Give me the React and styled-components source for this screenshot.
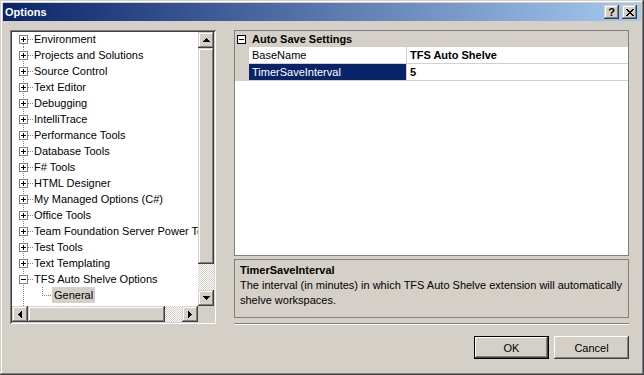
import React from 'react';
import styled, { createGlobalStyle, css } from 'styled-components';

const FACE = '#D4D0C8';
const SHADOW = '#808080';
const DARK = '#404040';
const HILITE = '#FFFFFF';
const NAVY = '#0A246A';

const Global = createGlobalStyle`
  html, body { margin: 0; padding: 0; background: ${FACE}; }
  body { font-family: "Liberation Sans", Arial, sans-serif; font-size: 11px; color: #000; }
  * { box-sizing: border-box; }
`;

const raisedSoft = css`
  background: ${FACE};
  box-shadow: inset -1px -1px ${DARK}, inset 1px 1px ${FACE}, inset -2px -2px ${SHADOW}, inset 2px 2px ${HILITE};
`;

const checker = css`
  background: repeating-conic-gradient(${HILITE} 0 25%, ${FACE} 0 50%) 0 0 / 2px 2px;
`;

const Window = styled.div`
  width: 644px;
  height: 375px;
  padding: 3px;
  background: ${FACE};
  box-shadow: inset -1px -1px ${DARK}, inset 1px 1px ${FACE}, inset -2px -2px ${SHADOW}, inset 2px 2px ${HILITE};
  display: flex;
  flex-direction: column;
`;

const TitleBar = styled.div`
  height: 18px;
  flex: none;
  background: linear-gradient(to right, ${NAVY}, #A6CAF0);
  display: flex;
  align-items: center;
  padding: 0 4px 0 2px;
`;

const TitleText = styled.div`
  flex: 1;
  color: #fff;
  font-weight: bold;
  font-size: 11px;
  line-height: 18px;
`;

const CaptionButton = styled.div`
  ${raisedSoft};
  width: 15px;
  height: 14px;
  margin-left: ${p => (p.$gap ? '3px' : '0')};
  display: flex;
  align-items: center;
  justify-content: center;
  font-weight: bold;
  font-size: 11px;
  line-height: 14px;
`;

const Body = styled.div`
  flex: 1;
  display: flex;
  flex-direction: column;
  padding: 9px 12px 0 7px;
`;

const MainRow = styled.div`
  height: 295px;
  display: flex;
  gap: 18px;
`;

/* ---------- Tree ---------- */
const TreeFrame = styled.div`
  width: 206px;
  height: 294px;
  padding: 2px;
  background: #fff;
  box-shadow: inset 1px 1px ${SHADOW}, inset -1px -1px ${HILITE}, inset 2px 2px ${DARK}, inset -2px -2px ${FACE};
  display: grid;
  grid-template-columns: 1fr 16px;
  grid-template-rows: 1fr 16px;
`;

const TreeViewport = styled.div`
  overflow: hidden;
  background: #fff;
`;

const TreeList = styled.div`
  margin-top: -1px;
  display: flex;
  flex-direction: column;
`;

const TreeRow = styled.div`
  height: 16px;
  display: flex;
  align-items: center;
  white-space: nowrap;
  flex: none;
`;

const TreeLabel = styled.span`
  height: 16px;
  line-height: 16px;
  padding: 0 ${p => (p.$selected ? '2px' : '1px')};
  background: ${p => (p.$selected ? FACE : 'transparent')};
`;

const VScroll = styled.div`
  display: flex;
  flex-direction: column;
  ${checker};
`;

const HScroll = styled.div`
  display: flex;
  ${checker};
`;

const Track = styled.div`
  flex: 1;
`;

const Corner = styled.div`
  background: ${FACE};
`;

const ScrollButton = styled.div`
  ${raisedSoft};
  width: 16px;
  height: 16px;
  flex: none;
  display: flex;
  align-items: center;
  justify-content: center;
`;

const Thumb = styled.div`
  ${raisedSoft};
  flex: none;
  width: ${p => (p.$horizontal ? `${p.$size}px` : '16px')};
  height: ${p => (p.$horizontal ? '16px' : `${p.$size}px`)};
`;

/* ---------- Right column ---------- */
const RightCol = styled.div`
  flex: 1;
  display: flex;
  flex-direction: column;
`;

const PropGrid = styled.div`
  height: 226px;
  flex: none;
  border: 1px solid ${SHADOW};
  background: #fff;
  display: flex;
  flex-direction: column;
`;

const CategoryRow = styled.div`
  height: 16px;
  background: ${FACE};
  display: flex;
  align-items: center;
  padding-left: 2px;
  font-weight: bold;
  gap: 6px;
`;

const PropRow = styled.div`
  height: 17px;
  display: flex;
`;

const Margin = styled.div`
  width: 14px;
  flex: none;
  background: ${FACE};
`;

const NameCell = styled.div`
  width: 158px;
  flex: none;
  height: 17px;
  border-bottom: 1px solid ${FACE};
  border-right: 1px solid ${FACE};
  padding-left: 3px;
  line-height: 16px;
  background: ${p => (p.$selected ? NAVY : '#fff')};
  color: ${p => (p.$selected ? '#fff' : '#000')};
`;

const ValueCell = styled.div`
  flex: 1;
  height: 17px;
  border-bottom: 1px solid ${FACE};
  padding-left: 3px;
  line-height: 16px;
  font-weight: bold;
`;

const DescPane = styled.div`
  margin-top: 3px;
  height: 59px;
  flex: none;
  border: 1px solid ${SHADOW};
  padding: 2px 5px;
`;

const DescTitle = styled.div`
  font-weight: bold;
  line-height: 16px;
`;

const DescText = styled.div`
  line-height: 15px;
`;

const Separator = styled.div`
  margin-top: auto;
  height: 2px;
  border-top: 1px solid ${SHADOW};
  border-bottom: 1px solid ${HILITE};
`;

const Footer = styled.div`
  margin-top: 11px;
  display: flex;
  justify-content: flex-end;
  gap: 5px;
`;

const Button = styled.div`
  width: 75px;
  height: 23px;
  display: flex;
  align-items: center;
  justify-content: center;
  background: ${FACE};
  ${p =>
    p.$default
      ? css`
          box-shadow: inset 0 0 0 1px #000, inset -2px -2px ${DARK}, inset 2px 2px ${HILITE}, inset -3px -3px ${SHADOW};
        `
      : css`
          box-shadow: inset -1px -1px ${DARK}, inset 1px 1px ${HILITE}, inset -2px -2px ${SHADOW};
        `}
`;

/* ---------- Drawings ---------- */
const CloseGlyph = () => (
  <svg width="8" height="7" shapeRendering="crispEdges">
    <path
      d="M0 0h2v1H0z M6 0h2v1H6z M1 1h2v1H1z M5 1h2v1H5z M2 2h4v1H2z M3 3h2v1H3z M2 4h4v1H2z M1 5h2v1H1z M5 5h2v1H5z M0 6h2v1H0z M6 6h2v1H6z"
      fill="#000"
    />
  </svg>
);

const Arrow = ({ dir }) => {
  const paths = {
    up: 'M3 0h1v1H3z M2 1h3v1H2z M1 2h5v1H1z M0 3h7v1H0z',
    down: 'M0 0h7v1H0z M1 1h5v1H1z M2 2h3v1H2z M3 3h1v1H3z',
    left: 'M0 3h1v1H0z M1 2h1v3H1z M2 1h1v5H2z M3 0h1v7H3z',
    right: 'M0 0h1v7H0z M1 1h1v5H1z M2 2h1v3H2z M3 3h1v1H3z',
  };
  const vertical = dir === 'up' || dir === 'down';
  return (
    <svg width={vertical ? 7 : 4} height={vertical ? 4 : 7} shapeRendering="crispEdges">
      <path d={paths[dir]} fill="#000" />
    </svg>
  );
};

const ExpandBox = ({ x, y, expanded, color = SHADOW }) => (
  <g>
    <rect x={x + 0.5} y={y + 0.5} width="8" height="8" fill="#fff" stroke={color} />
    <rect x={x + 2} y={y + 4} width="5" height="1" fill="#000" />
    {!expanded && <rect x={x + 4} y={y + 2} width="1" height="5" fill="#000" />}
  </g>
);

const RootGlyph = ({ first, expanded }) => (
  <svg width="21" height="16" shapeRendering="crispEdges" style={{ flex: 'none' }}>
    <line x1="11.5" y1={first ? 13 : 0} x2="11.5" y2="16" stroke={SHADOW} strokeDasharray="1 1" />
    <line x1="16" y1="8.5" x2="21" y2="8.5" stroke={SHADOW} strokeDasharray="1 1" />
    <ExpandBox x={7} y={4} expanded={expanded} />
  </svg>
);

const ChildGlyph = () => (
  <svg width="40" height="16" shapeRendering="crispEdges" style={{ flex: 'none' }}>
    <line x1="11.5" y1="0" x2="11.5" y2="16" stroke={SHADOW} strokeDasharray="1 1" />
    <line x1="30.5" y1="0" x2="30.5" y2="9" stroke={SHADOW} strokeDasharray="1 1" />
    <line x1="30" y1="8.5" x2="40" y2="8.5" stroke={SHADOW} strokeDasharray="1 1" />
  </svg>
);

const MinusBox = () => (
  <svg width="9" height="9" shapeRendering="crispEdges" style={{ flex: 'none' }}>
    <ExpandBox x={0} y={0} expanded color="#000" />
  </svg>
);

const treeItems = [
  'Environment',
  'Projects and Solutions',
  'Source Control',
  'Text Editor',
  'Debugging',
  'IntelliTrace',
  'Performance Tools',
  'Database Tools',
  'F# Tools',
  'HTML Designer',
  'My Managed Options (C#)',
  'Office Tools',
  'Team Foundation Server Power Tools',
  'Test Tools',
  'Text Templating',
];

export default function App() {
  return (
    <>
      <Global />
      <Window>
        <TitleBar>
          <TitleText>Options</TitleText>
          <CaptionButton>?</CaptionButton>
          <CaptionButton $gap>
            <CloseGlyph />
          </CaptionButton>
        </TitleBar>
        <Body>
          <MainRow>
            <TreeFrame>
              <TreeViewport>
                <TreeList>
                  {treeItems.map((label, i) => (
                    <TreeRow key={label}>
                      <RootGlyph first={i === 0} />
                      <TreeLabel>{label}</TreeLabel>
                    </TreeRow>
                  ))}
                  <TreeRow>
                    <RootGlyph expanded />
                    <TreeLabel>TFS Auto Shelve Options</TreeLabel>
                  </TreeRow>
                  <TreeRow>
                    <ChildGlyph />
                    <TreeLabel $selected>General</TreeLabel>
                  </TreeRow>
                  <TreeRow>
                    <RootGlyph />
                  </TreeRow>
                </TreeList>
              </TreeViewport>
              <VScroll>
                <ScrollButton>
                  <Arrow dir="up" />
                </ScrollButton>
                <Thumb $size={216} />
                <Track />
                <ScrollButton>
                  <Arrow dir="down" />
                </ScrollButton>
              </VScroll>
              <HScroll>
                <ScrollButton>
                  <Arrow dir="left" />
                </ScrollButton>
                <Thumb $horizontal $size={137} />
                <Track />
                <ScrollButton>
                  <Arrow dir="right" />
                </ScrollButton>
              </HScroll>
              <Corner />
            </TreeFrame>
            <RightCol>
              <PropGrid>
                <CategoryRow>
                  <MinusBox />
                  <span>Auto Save Settings</span>
                </CategoryRow>
                <PropRow>
                  <Margin />
                  <NameCell>BaseName</NameCell>
                  <ValueCell>TFS Auto Shelve</ValueCell>
                </PropRow>
                <PropRow>
                  <Margin />
                  <NameCell $selected>TimerSaveInterval</NameCell>
                  <ValueCell>5</ValueCell>
                </PropRow>
              </PropGrid>
              <DescPane>
                <DescTitle>TimerSaveInterval</DescTitle>
                <DescText>
                  The interval (in minutes) in which TFS Auto Shelve extension will automatically shelve workspaces.
                </DescText>
              </DescPane>
              <Separator />
            </RightCol>
          </MainRow>
          <Footer>
            <Button $default>OK</Button>
            <Button>Cancel</Button>
          </Footer>
        </Body>
      </Window>
    </>
  );
}
